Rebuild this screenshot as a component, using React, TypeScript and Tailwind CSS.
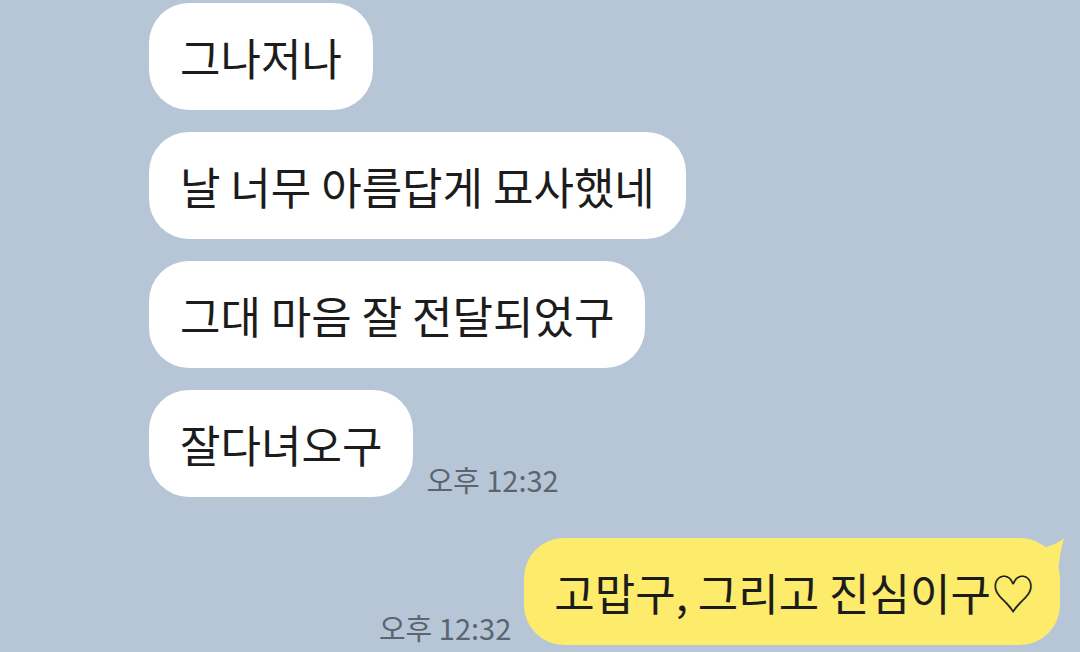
import React from 'react';

const font = { fontFamily: '"Noto Sans CJK KR", "Noto Sans", sans-serif' };

const received = ['그나저나', '날 너무 아름답게 묘사했네', '그대 마음 잘 전달되었구', '잘다녀오구'];

const Time = () => (
  <span className="text-[29px] leading-none text-[#5b6571] pb-[3px] whitespace-nowrap">오후 12:32</span>
);

export default function App() {
  return (
    <div className="w-[1080px] h-[652px] overflow-hidden bg-[#b6c6d6] relative" style={font}>
      <div className="flex flex-col gap-[22px] pt-[3px] pl-[149px]">
        {received.map((msg, i) => (
          <div key={msg} className="flex items-end gap-[13px]">
            <div className="bg-white rounded-[40px] h-[107px] px-[31px] flex items-center text-[44px] text-[#1c1c1c] whitespace-nowrap">
              {msg}
            </div>
            {i === received.length - 1 && <Time />}
          </div>
        ))}
      </div>
      <div className="flex justify-end items-end gap-[13px] pr-[20px] mt-[41px]">
        <Time />
        <div className="relative bg-[#fdeb6b] rounded-[40px] h-[107px] pl-[30px] pr-[25px] flex items-center text-[44px] text-[#1c1c1c] whitespace-nowrap">
          고맙구, 그리고 진심이구♡
          <svg className="absolute -top-[1px] -right-[6px]" width="40" height="40" viewBox="0 0 40 40">
            <path d="M6 13 Q30 9 38 1 Q34 14 32 36 L6 36 Z" fill="#fdeb6b" />
          </svg>
        </div>
      </div>
    </div>
  );
}
